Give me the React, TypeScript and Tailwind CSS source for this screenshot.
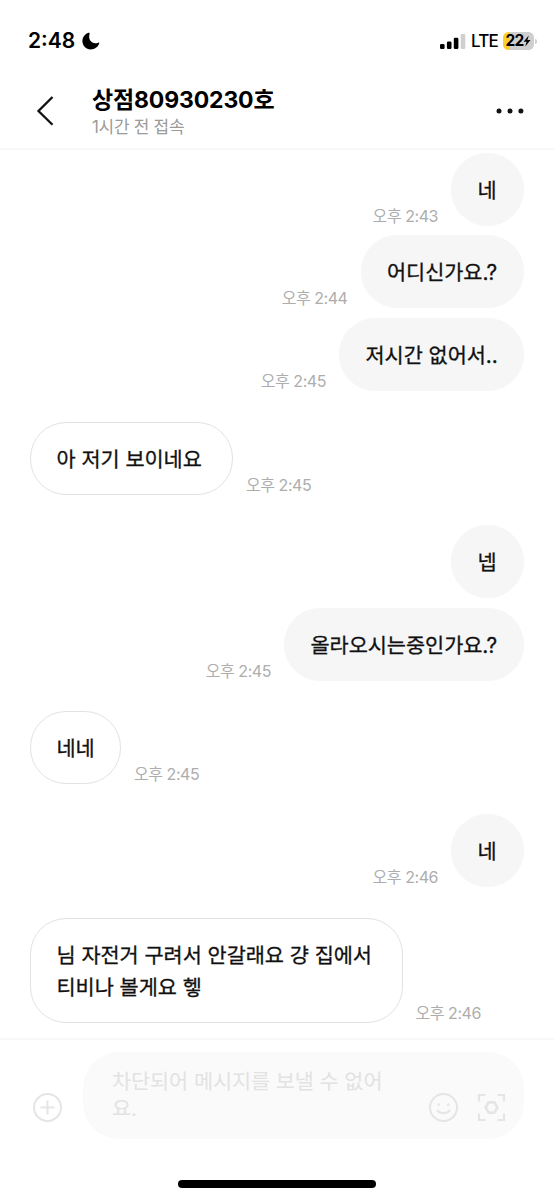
import React from "react";

interface Message {
  id: number;
  text: string;
  mine: boolean;
  time?: string;
  bubble: string;
}

const messages: Message[] = [
  { id: 1, text: "네", mine: true, time: "오후 2:43", bubble: "w-[73px]" },
  { id: 2, text: "어디신가요.?", mine: true, time: "오후 2:44", bubble: "w-[163.5px] mt-[9.7px]" },
  { id: 3, text: "저시간 없어서..", mine: true, time: "오후 2:45", bubble: "w-[185px] mt-[9.7px]" },
  { id: 4, text: "아 저기 보이네요", mine: false, time: "오후 2:45", bubble: "w-[203px] mt-[30.7px]" },
  { id: 5, text: "넵", mine: true, bubble: "w-[73px] mt-[30.6px]" },
  { id: 6, text: "올라오시는중인가요.?", mine: true, time: "오후 2:45", bubble: "w-[240px] mt-[9.7px]" },
  { id: 7, text: "네네", mine: false, time: "오후 2:45", bubble: "w-[91px] mt-[30.2px]" },
  { id: 8, text: "네", mine: true, time: "오후 2:46", bubble: "w-[73px] mt-[30.4px]" },
  {
    id: 9,
    text: "님 자전거 구려서 안갈래요 걍 집에서\n티비나 볼게요 헿",
    mine: false,
    time: "오후 2:46",
    bubble: "w-[372.5px] mt-[30.4px]",
  },
];

const StatusBar: React.FC = () => (
  <div className="flex h-[72px] items-center justify-between pt-[10px] pr-[17px] pl-7 text-black">
    <div className="flex items-center gap-[6px]">
      <span className="w-[48px] text-[21px] leading-6 font-semibold">2:48</span>
      <svg width="18" height="18" viewBox="0 0 18 18">
        <path d="M6.6 0.8C2.8 2.2 0.4 5.3 0.4 9.1c0 4.7 3.7 8.3 8.3 8.3 3.9 0 7.2-2.3 8.5-5.9.2-.7-.3-1.1-1-.8C10.5 12.8 5.6 8.3 7.6 1.8c.2-.8-.3-1.3-1-1z" />
      </svg>
    </div>
    <div className="flex items-center">
      <svg width="26" height="17" viewBox="0 0 26 17">
        <rect x="0" y="11" width="4.6" height="5" rx="1.3" />
        <rect x="6.9" y="8.6" width="4.6" height="7.4" rx="1.3" />
        <rect x="13.8" y="4.8" width="4.6" height="11.2" rx="1.3" />
        <rect x="20.7" y="1" width="4.6" height="15" rx="1.3" fill="#cfcfcf" />
      </svg>
      <span className="ml-[5px] w-[28px] text-[17px] leading-6 font-medium tracking-[-0.8px]">
        LTE
      </span>
      <div className="ml-[4px] flex h-[17.5px] w-[31px] items-center justify-center rounded-[5.5px] bg-[linear-gradient(90deg,#fbd02d_24%,#cfcfcf_24%)]">
        <span className="text-[15.5px] leading-none font-bold tracking-[-0.8px]">22</span>
        <svg width="8" height="12" viewBox="0 0 8 12">
          <path d="M5.8 0.5 0.6 6.7h3L2.2 11.5 7.5 5.1H4.4z" />
        </svg>
      </div>
      <div className="ml-[1px] h-[5px] w-[2px] rounded-r-full bg-[#cfcfcf]" />
    </div>
  </div>
);

const ChatHeader: React.FC = () => (
  <header className="flex h-[78px] items-start border-b-2 border-[#f7f7f7] pr-[30px] pl-[36px]">
    <button className="mt-[23px]" aria-label="뒤로">
      <svg width="20" height="32" viewBox="0 0 20 32" fill="none" stroke="#111" strokeWidth="2.3">
        <path d="M16.5 2 2.5 16l14 13.8" />
      </svg>
    </button>
    <div className="mt-[13px] ml-9 flex-1">
      <h1 className="text-[23px] leading-[30px] font-bold tracking-[-0.15px] text-black">
        상점80930230호
      </h1>
      <p className="text-[17px] leading-6 tracking-[-0.3px] text-[#9b9b9b]">1시간 전 접속</p>
    </div>
    <button className="mt-[36px]" aria-label="더보기">
      <svg width="28" height="6" viewBox="0 0 28 6" fill="#111">
        <circle cx="3" cy="3" r="2.5" />
        <circle cx="14" cy="3" r="2.5" />
        <circle cx="24.9" cy="3" r="2.5" />
      </svg>
    </button>
  </header>
);

const MessageRow: React.FC<{ message: Message }> = ({ message }) => {
  const { text, mine, time, bubble } = message;
  return (
    <div className={mine ? "flex flex-row-reverse items-end gap-[13px]" : "flex items-end gap-[13px]"}>
      <div
        className={`${bubble} rounded-[36px] border pt-[21px] pb-[18px] pl-[25.5px] text-[20.8px] leading-8 tracking-[-0.04px] whitespace-pre text-[#111] [-webkit-text-stroke:0.3px_#111] ${
          mine ? "border-[#f6f6f6] bg-[#f6f6f6]" : "border-[#e2e2e2] bg-white"
        }`}
      >
        {text}
      </div>
      {time && (
        <span className="text-[16px] leading-5 tracking-[-0.45px] whitespace-nowrap text-[#adadad]">
          {time}
        </span>
      )}
    </div>
  );
};

const MessageInput: React.FC = () => (
  <footer className="flex border-t-2 border-[#f7f7f7] pt-[12px] pr-[30px] pl-[32px] text-[#e5e5e5]">
    <svg className="mt-[40px]" width="31" height="31" viewBox="0 0 31 31" fill="none" stroke="currentColor" strokeWidth="2">
      <circle cx="15.5" cy="15.5" r="13.5" />
      <path d="M15.5 8.5v14M8.5 15.5h14" />
    </svg>
    <div className="ml-[20px] flex h-[87px] flex-1 rounded-[36px] bg-[#fafafa] pl-[29px]">
      <p className="mt-[16px] w-[280px] text-[20.8px] leading-[27px] tracking-[-0.1px] whitespace-pre text-[#e2e2e2]">
        {"차단되어 메시지를 보낼 수 없어\n요."}
      </p>
      <svg className="mt-[40px] ml-[36px] shrink-0" width="31" height="31" viewBox="0 0 31 31" fill="none" stroke="currentColor" strokeWidth="2">
        <circle cx="15.5" cy="15.5" r="13.5" />
        <path d="M9 17.7c2.3 4.4 10.7 4.4 13 0" />
        <circle cx="10.7" cy="12.6" r="1.3" fill="currentColor" stroke="none" />
        <circle cx="20.3" cy="12.6" r="1.3" fill="currentColor" stroke="none" />
      </svg>
      <svg className="mt-[40px] ml-[17px] shrink-0" width="31" height="31" viewBox="0 0 31 31" fill="none" stroke="currentColor" strokeWidth="2.2">
        <path d="M3 9.5V3h6.5M21.5 3H28v6.5M28 21.5V28h-6.5M9.5 28H3v-6.5" />
        <path d="M12.6 10.4h5.8l3 5.1-3 5.1h-5.8l-3-5.1z" strokeWidth="2.6" strokeLinejoin="round" />
      </svg>
    </div>
  </footer>
);

const App: React.FC = () => {
  return (
    <div className="flex h-[1200px] w-[554px] flex-col overflow-hidden bg-white font-[Inter,'Noto_Sans_CJK_KR',sans-serif]">
      <StatusBar />
      <ChatHeader />
      <main className="h-[888px] shrink-0 px-[30px] pt-[2.5px]">
        {messages.map((message) => (
          <MessageRow key={message.id} message={message} />
        ))}
      </main>
      <MessageInput />
      <div className="mx-auto mt-[41px] h-[8px] w-[198px] shrink-0 rounded-full bg-black" />
    </div>
  );
};

export default App;
